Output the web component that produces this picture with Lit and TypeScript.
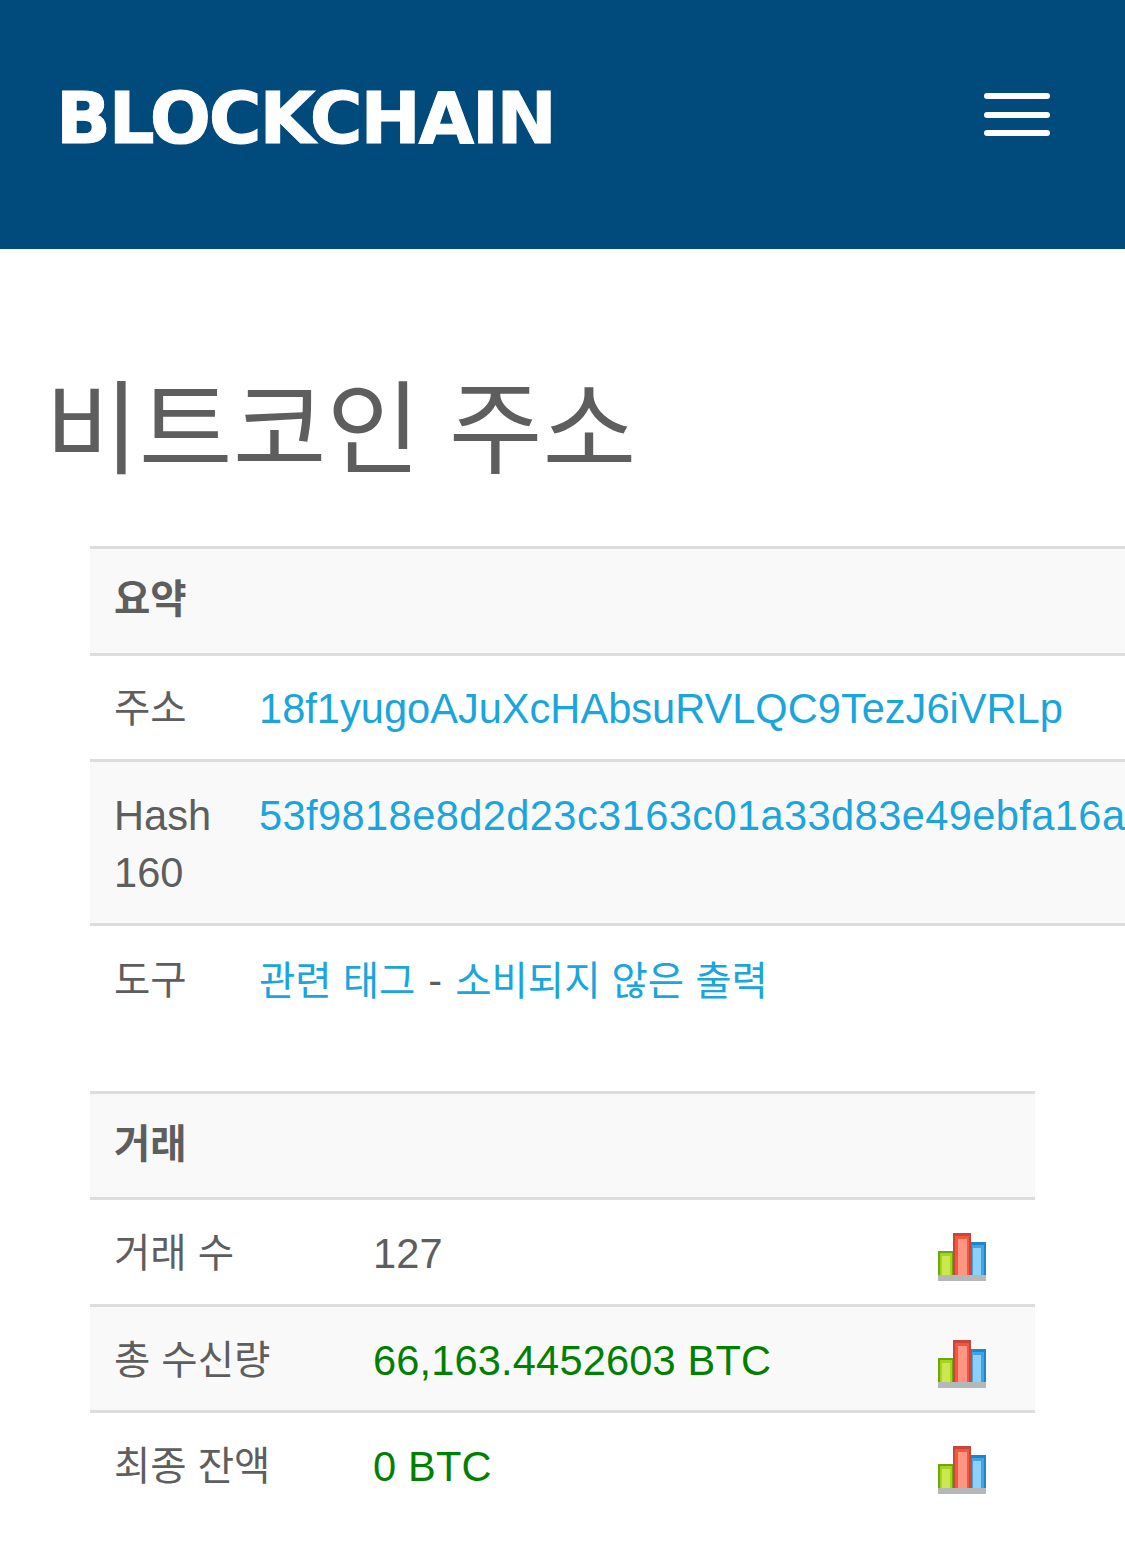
import { LitElement, html, css, svg } from "lit";
import { customElement } from "lit/decorators.js";

const chart = () => html`<svg class="chart" width="48" height="48" viewBox="0 0 48 48" aria-hidden="true">
  ${svg`
  <rect x="0" y="42" width="48" height="6" fill="#b4b8ba"/>
  <rect x="0" y="18" width="16" height="24" fill="#6aa80f"/>
  <rect x="2" y="20" width="12" height="22" fill="#a4d41e"/>
  <rect x="4" y="23" width="8" height="19" fill="#cbe84e"/>
  <rect x="15" y="0" width="18" height="42" fill="#c9473a"/>
  <rect x="17" y="3" width="14" height="39" fill="#f4573f"/>
  <rect x="20" y="6" width="9" height="36" fill="#ff9583"/>
  <rect x="33" y="9" width="15" height="33" fill="#1f86c8"/>
  <rect x="34" y="12" width="12" height="30" fill="#3ea6e8"/>
  <rect x="35" y="15" width="8" height="27" fill="#8ed0f6"/>
  `}
</svg>`;

@customElement("app-root")
export class AppRoot extends LitElement {
  static styles = css`
    :host {
      display: block;
      width: 1125px;
      height: 1568px;
      overflow: hidden;
      background: #fff;
      color: #5e5e5e;
      font-family: "Liberation Sans", "Noto Sans CJK KR", sans-serif;
      font-size: 39.5px;
      line-height: 57px;
    }
    header {
      height: 249px;
      background: #004a7c;
      display: flex;
      justify-content: space-between;
      align-items: flex-start;
      padding: 0 75px 0 56px;
      box-sizing: border-box;
    }
    .logo {
      font-family: "DejaVu Sans", sans-serif;
      font-weight: 700;
      font-size: 72px;
      line-height: 72px;
      letter-spacing: -2.2px;
      color: #fff;
      -webkit-text-stroke: 1px #fff;
      margin-top: 82px;
    }
    .menu {
      width: 66px;
      margin-top: 93px;
      display: flex;
      flex-direction: column;
      gap: 12.5px;
    }
    .menu span {
      display: block;
      height: 6px;
      background: #fff;
      border-radius: 3px;
    }
    h1 {
      margin: 0;
      padding: 122px 0 0 45px;
      height: 175px;
      font-weight: 400;
      font-size: 102px;
      line-height: 120px;
      white-space: nowrap;
    }
    .tbl {
      margin-left: 90px;
      border-top: 3px solid #dddddd;
    }
    .wide {
      width: 1200px;
    }
    .narrow {
      width: 945px;
    }
    .row {
      display: flex;
      border-bottom: 3.5px solid #dddddd;
      padding: 24px 24px 22.5px;
      white-space: nowrap;
    }
    .narrow .row {
      padding: 25px 24px 21.5px;
    }
    .narrow .row.head,
    .row.head {
      font-weight: 700;
      padding: 22px 24px 24.5px;
    }
    .row.last {
      border-bottom: 0;
    }
    .gray {
      background: #f9f9f9;
    }
    .k1 {
      width: 145px;
      flex: none;
      white-space: normal;
    }
    .k2 {
      width: 259px;
      flex: none;
    }
    .v2 {
      flex: 1;
      letter-spacing: 0.15px;
    }
    .lat {
      font-size: 41.6px;
    }
    .hash-row {
      padding: 25px 24px 21.5px;
    }
    .hash {
      letter-spacing: 0.4px;
    }
    .dash {
      margin: 0 2px;
    }
    .icon {
      width: 48px;
      margin-right: 25px;
      flex: none;
      padding-top: 8px;
      height: 48px;
    }
    .chart {
      display: block;
      filter: blur(0.5px);
    }
    a {
      color: #1aa5dc;
      text-decoration: none;
    }
    .green {
      color: #008000;
    }
    .tools {
      padding-top: 26px;
    }
    .gap {
      height: 58.5px;
    }
  `;

  render() {
    return html`
      <header>
        <div class="logo">BLOCKCHAIN</div>
        <div class="menu"><span></span><span></span><span></span></div>
      </header>
      <h1>비트코인 주소</h1>
      <section class="tbl wide">
        <div class="row gray head"><div>요약</div></div>
        <div class="row"><div class="k1">주소</div><a class="lat">18f1yugoAJuXcHAbsuRVLQC9TezJ6iVRLp</a></div>
        <div class="row gray hash-row"><div class="k1 lat">Hash 160</div><a class="lat hash">53f9818e8d2d23c3163c01a33d83e49ebfa16a</a></div>
        <div class="row last tools"><div class="k1">도구</div><div><a>관련 태그</a> <span class="lat dash">-</span> <a>소비되지 않은 출력</a></div></div>
      </section>
      <div class="gap"></div>
      <section class="tbl narrow">
        <div class="row gray head"><div>거래</div></div>
        <div class="row"><div class="k2">거래 수</div><div class="v2 lat">127</div><div class="icon">${chart()}</div></div>
        <div class="row gray"><div class="k2">총 수신량</div><div class="v2 lat green">66,163.4452603 BTC</div><div class="icon">${chart()}</div></div>
        <div class="row last"><div class="k2">최종 잔액</div><div class="v2 lat green">0 BTC</div><div class="icon">${chart()}</div></div>
      </section>
    `;
  }
}
